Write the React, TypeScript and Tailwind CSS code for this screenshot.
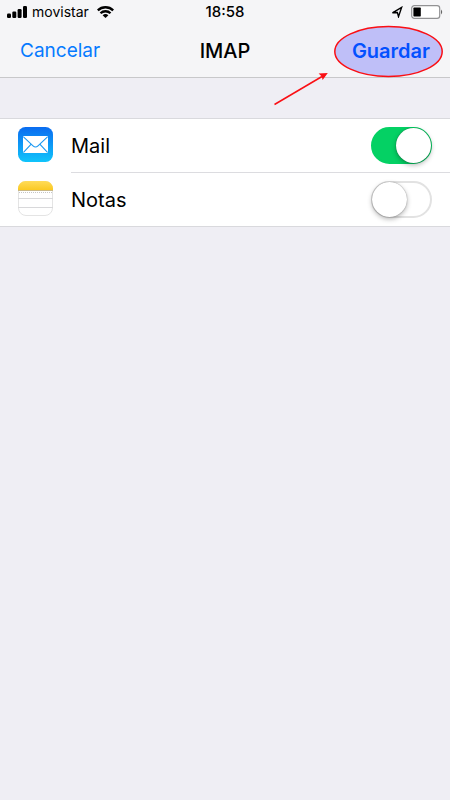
import { useState, type ReactNode } from 'react';

function StatusBar() {
  return (
    <div className="grid h-6 grid-cols-3 items-center px-[7px] text-sm leading-4">
      <div className="flex items-center">
        <svg width="21" height="13" viewBox="0 0 21 13" aria-hidden="true">
          <rect x="0" y="7.5" width="4" height="4.5" rx="1.2" />
          <rect x="5.3" y="5.5" width="4" height="6.5" rx="1.2" />
          <rect x="10.6" y="3" width="4" height="9" rx="1.2" />
          <rect x="16" y="0" width="4" height="12" rx="1.2" />
        </svg>
        <span className="ml-1">movistar</span>
        <svg className="ml-2" width="17" height="12" viewBox="0 0 17 12" aria-hidden="true">
          <g fill="none" stroke="#000" strokeWidth="2.3">
            <path d="M0.8 4.4 A11 11 0 0 1 16.2 4.4" />
            <path d="M3.5 7.3 A7.1 7.1 0 0 1 13.5 7.3" />
          </g>
          <path d="M8.5 12 L5.6 9.2 A4.3 4.3 0 0 1 11.4 9.2 Z" />
        </svg>
      </div>
      <span className="text-center text-[15px] font-medium leading-5">18:58</span>
      <div className="flex items-center justify-end gap-2">
        <svg width="12" height="12" viewBox="0 0 12 12" aria-hidden="true">
          <path d="M1.4 6.8 L10.6 1.4 L7.5 10.6 L6.4 6.5 Z" fill="none" stroke="#000" strokeWidth="1.4" />
        </svg>
        <svg width="32" height="14" viewBox="0 0 32 14" aria-hidden="true">
          <rect x="0.7" y="0.7" width="28" height="12.6" rx="2.6" fill="#fff" stroke="#929294" strokeWidth="1.2" />
          <rect x="2.4" y="2.6" width="7.4" height="8.8" rx="0.6" />
          <path d="M30 4.6 Q32.4 7 30 9.4 Z" fill="#666" />
        </svg>
      </div>
    </div>
  );
}

function MailIcon() {
  return (
    <svg width="35" height="35" viewBox="0 0 35 35" aria-hidden="true">
      <defs>
        <linearGradient id="mail-bg" x1="0" y1="0" x2="0" y2="1">
          <stop offset="0" stopColor="#0a6cf0" />
          <stop offset="1" stopColor="#10c4fb" />
        </linearGradient>
      </defs>
      <rect width="35" height="35" rx="7.5" fill="url(#mail-bg)" />
      <rect x="5" y="9" width="25" height="17" rx="1.2" fill="#fff" />
      <g fill="none" stroke="#1998f2" strokeWidth="1.1">
        <path d="M5.5 9.8 L15 18.8 Q17.5 21.2 20 18.8 L29.5 9.8" />
        <path d="M5.5 25.4 L13.2 17.2 M29.5 25.4 L21.8 17.2" />
      </g>
    </svg>
  );
}

function NotesIcon() {
  return (
    <svg width="35" height="35" viewBox="0 0 35 35" aria-hidden="true">
      <defs>
        <linearGradient id="notes-top" x1="0" y1="0" x2="0" y2="1">
          <stop offset="0" stopColor="#ffdc59" />
          <stop offset="1" stopColor="#fbc922" />
        </linearGradient>
      </defs>
      <rect x="0.5" y="0.5" width="34" height="34" rx="7.5" fill="#fff" stroke="#e4e4e4" />
      <path d="M0 9 V7.5 A7.5 7.5 0 0 1 7.5 0 H27.5 A7.5 7.5 0 0 1 35 7.5 V9 Z" fill="url(#notes-top)" />
      <path d="M0 9.5 H35" stroke="#c9b886" />
      <path d="M1 11.5 H34" stroke="#c6c6c6" strokeDasharray="1 1" />
      <path d="M0 17.5 H35 M0 26.5 H35" stroke="#d8d8da" />
    </svg>
  );
}

type RowProps = {
  id: string;
  label: string;
  icon: ReactNode;
  checked: boolean;
  onChange: (checked: boolean) => void;
};

function SettingRow({ id, label, icon, checked, onChange }: RowProps) {
  return (
    <li className="group flex pl-[18px]">
      <span className="w-[53px] shrink-0 pt-2">{icon}</span>
      <div className="flex h-[54px] grow items-center justify-between border-b border-[#dcdce0] pr-[18px] group-last:h-[53px] group-last:border-b-0">
        <label htmlFor={id} className="grow text-xl">
          {label}
        </label>
        <input
          id={id}
          type="checkbox"
          role="switch"
          checked={checked}
          onChange={(e) => onChange(e.target.checked)}
          className="flex h-[37px] w-[61px] shrink-0 appearance-none items-center rounded-full border-2 border-[#e2e2e2] bg-white before:-ml-px before:-mr-px before:size-[35px] before:shrink-0 before:rounded-full before:bg-white before:shadow-[0_2px_5px_rgba(0,0,0,0.3),0_0_1px_rgba(0,0,0,0.5)] checked:justify-end checked:border-[#04d164] checked:bg-[#04d164]"
        />
      </div>
    </li>
  );
}

export default function App() {
  const [mail, setMail] = useState(true);
  const [notes, setNotes] = useState(false);

  return (
    <div className="min-h-screen bg-[#efeef4] font-[Inter,sans-serif] text-black">
      <header className="relative border-b border-[#c8c8ca] bg-[#f5f5f7]">
        <StatusBar />
        <nav className="grid h-[53px] grid-cols-3 items-center px-5 text-xl">
          <button type="button" className="justify-self-start text-[19px] leading-7 text-[#057aff]">
            Cancelar
          </button>
          <h1 className="text-center font-medium">IMAP</h1>
          <button type="button" className="justify-self-end font-semibold text-[#0568ff]">
            Guardar
          </button>
        </nav>
        {/* Highlight around the save button */}
        <svg
          className="pointer-events-none absolute right-0 top-6"
          width="180"
          height="84"
          viewBox="0 0 180 84"
          aria-hidden="true"
        >
          <ellipse cx="118.5" cy="27.5" rx="53.7" ry="25" fill="#0000ff" fillOpacity="0.22" stroke="#fa0f14" strokeWidth="1.5" />
          <path d="M4.5 80.5 L52 52.5" stroke="#fa0f14" strokeWidth="1.5" />
          <path d="M57.8 49 L52.6 56 L51.8 52.6 L48.6 49.6 Z" fill="#fa0f14" />
        </svg>
      </header>

      <main className="pt-10">
        <ul className="border-y border-[#d9d9dd] bg-white">
          <SettingRow id="mail" label="Mail" icon={<MailIcon />} checked={mail} onChange={setMail} />
          <SettingRow id="notes" label="Notas" icon={<NotesIcon />} checked={notes} onChange={setNotes} />
        </ul>
      </main>
    </div>
  );
}
